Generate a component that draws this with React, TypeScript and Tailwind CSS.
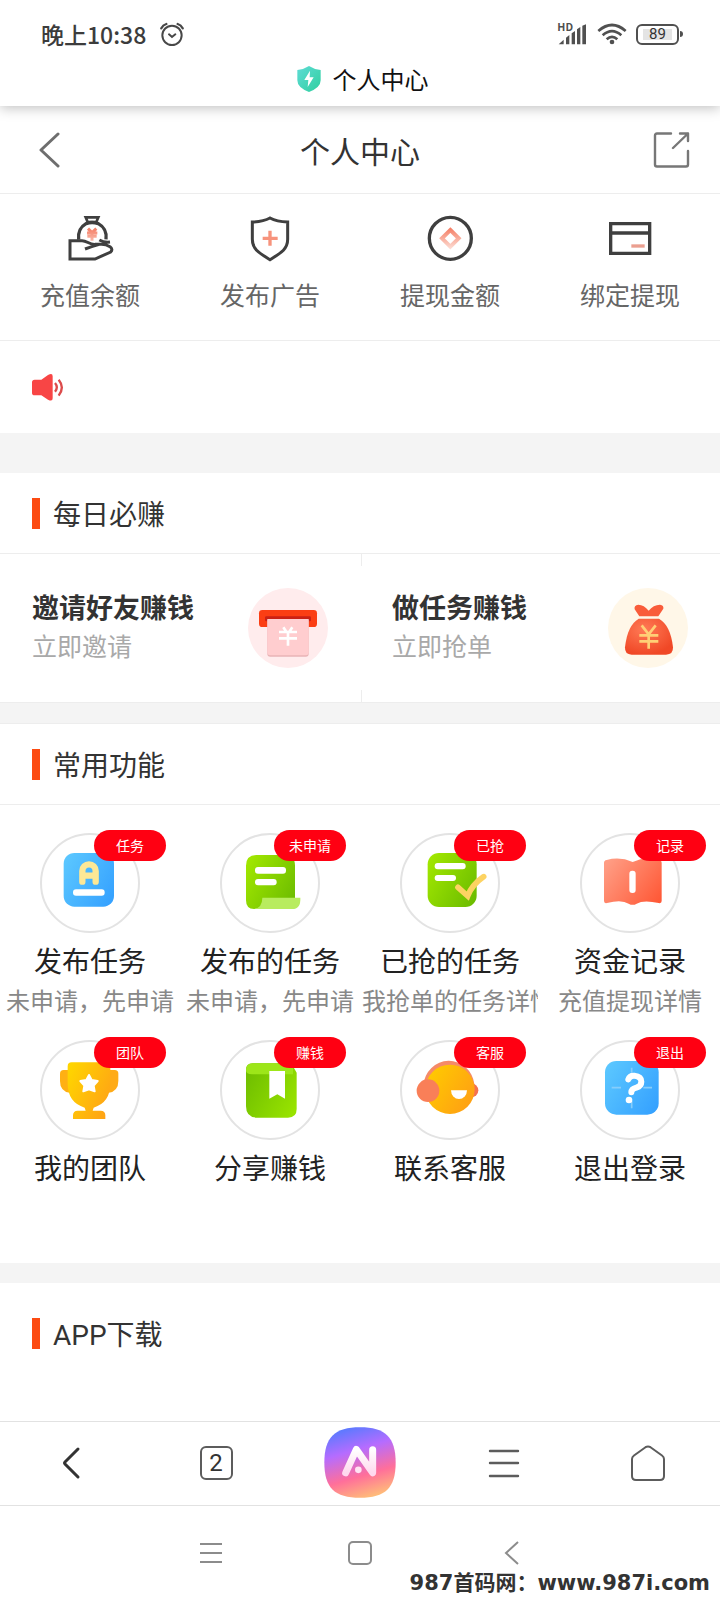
import type { ReactNode } from "react";

function ShieldBolt() {
  return (
    <svg width="26" height="28" viewBox="0 0 78 84" aria-hidden="true">
      <defs>
        <linearGradient id="sb" x1="0" y1="0" x2="1" y2="1">
          <stop offset="0" stopColor="#5fdcd6" />
          <stop offset="1" stopColor="#2fcf9e" />
        </linearGradient>
      </defs>
      <path d="M39 3 Q54 13 74 15 V46 Q74 68 39 81 Q4 68 4 46 V15 Q24 13 39 3Z" fill="url(#sb)" />
      <path d="M42 17 L25 45 H37 L35 66 L53 37 H41Z" fill="#fff" />
    </svg>
  );
}

function AlarmIcon() {
  return (
    <svg width="24" height="24" viewBox="0 0 72 72" fill="none" stroke="#484848" strokeWidth="6" strokeLinecap="round" aria-hidden="true">
      <circle cx="36" cy="40" r="29" />
      <path d="M27 37 L36 45 L46 37" />
      <path d="M4 19 Q9 9 19 6 M53 6 Q63 9 68 19" strokeWidth="7" />
    </svg>
  );
}

function SignalIcon() {
  return (
    <svg width="30" height="24" viewBox="0 0 90 72" fill="#505050" className="overflow-visible" aria-hidden="true">
      <text x="-2" y="27" fontSize="32" fontWeight="700" fontFamily="Noto Sans CJK SC, sans-serif">
        HD
      </text>
      <path d="M2 67 L17 53 V67Z M24 67 V47 L34 39 V67Z M41 67 V34 L51 27 V67Z M57 67 V22 L67 15 V67Z M73 67 V11 L84 7 V67Z" />
    </svg>
  );
}

function WifiIcon() {
  return (
    <svg width="30" height="22" viewBox="0 0 90 66" fill="none" stroke="#505050" strokeWidth="8" aria-hidden="true">
      <path d="M4 24 Q45 -12 86 24" />
      <path d="M17 37 Q45 12 73 37" />
      <path d="M29 49 Q45 34 61 49" />
      <circle cx="45" cy="57" r="7" fill="#505050" stroke="none" />
    </svg>
  );
}

function Battery() {
  return (
    <div className="flex items-center gap-px">
      <div className="flex h-[21px] w-[43px] items-center justify-center rounded-[6px] border-2 border-[#505050]">
        <span className="bg-[#e4e4e4] px-[6px] font-['Roboto'] text-[15px] leading-[11px] text-[#333]">89</span>
      </div>
      <div className="h-[6px] w-[3px] rounded-r-sm bg-[#505050]" />
    </div>
  );
}

const coral = (
  <defs>
    <linearGradient id="coral" gradientUnits="userSpaceOnUse" x1="0" y1="40" x2="0" y2="106">
      <stop offset="0" stopColor="#f47a60" />
      <stop offset="1" stopColor="#fde0d8" />
    </linearGradient>
  </defs>
);

function QuickSvg({ children }: { children: ReactNode }) {
  return (
    <svg width="48" height="48" viewBox="0 0 144 144" fill="none" stroke="#3f3f3f" strokeWidth="10" aria-hidden="true">
      {coral}
      {children}
    </svg>
  );
}

const quick = [
  {
    label: "充值余额",
    icon: (
      <QuickSvg>
        <path d="M59 10 H97 L91 24 H65Z" strokeWidth="8" />
        <path d="M38 77 Q34 44 60 29 Q78 22 97 29 Q124 44 120 76" />
        <path d="M66 44 L78 56 L91 44 M63 57 H94 M64 67 H92 M78 56 V80" stroke="url(#coral)" strokeWidth="9" />
        <path d="M12 80 H48 C64 80 70 93 88 91 L100 91 M12 76 V135 H87 L134 114 Q142 106 132 98 Q118 89 100 91 Q78 97 57 105 M100 78 Q114 86 132 84" strokeWidth="9" />
      </QuickSvg>
    ),
  },
  {
    label: "发布广告",
    icon: (
      <QuickSvg>
        <path d="M72 12 Q92 23 125 24 V76 C125 106 104 117 72 137 C40 117 19 106 19 76 V24 Q52 23 72 12Z" strokeWidth="9" />
        <path d="M50 73 H95 M72 50 V95" stroke="#f7937c" />
      </QuickSvg>
    ),
  },
  {
    label: "提现金额",
    icon: (
      <QuickSvg>
        <circle cx="73" cy="73" r="63" />
        <path d="M73 48 L98 73 L73 98 L48 73Z" stroke="url(#coral)" strokeWidth="12" />
      </QuickSvg>
    ),
  },
  {
    label: "绑定提现",
    icon: (
      <QuickSvg>
        <path d="M14 29 H131 V118 H14Z M14 57 H131" />
        <path d="M76 96 H116" stroke="#eb9f90" />
      </QuickSvg>
    ),
  },
];

function FeatureSvg({ id, from, to, children }: { id: string; from: string; to: string; children: ReactNode }) {
  return (
    <svg className="size-full" viewBox="6 6 288 288" aria-hidden="true">
      <defs>
        <linearGradient id={id} x1="0" y1="0.2" x2="1" y2="0.8">
          <stop offset="0" stopColor={from} />
          <stop offset="1" stopColor={to} />
        </linearGradient>
      </defs>
      {children}
    </svg>
  );
}

const features = [
  {
    label: "发布任务",
    badge: "任务",
    note: "未申请，先申请",
    icon: (
      <FeatureSvg id="f1" from="#5ac6ff" to="#36a2ff">
        <rect x="71" y="60" width="151" height="161" rx="32" fill="url(#f1)" />
        <path d="M127 146 V114 a20 20 0 0 1 40 0 V146 M127 128 H167" fill="none" stroke="#fde896" strokeWidth="19" strokeLinecap="round" />
        <rect x="99" y="169" width="95" height="19" rx="9" fill="#fff" />
      </FeatureSvg>
    ),
  },
  {
    label: "发布的任务",
    badge: "未申请",
    note: "未申请，先申请",
    icon: (
      <FeatureSvg id="f2" from="#a0e600" to="#6dbd00">
        <path d="M78 98 Q78 66 110 66 H193 Q225 66 225 98 V205 H135 Q128 228 102 228 Q78 228 78 202Z" fill="url(#f2)" />
        <path d="M127 194 H241 Q243 228 216 228 H102 Q127 224 127 194Z" fill="#b8ec5f" />
        <rect x="105" y="102" width="93" height="20" rx="9" fill="#fff" />
        <rect x="105" y="138" width="65" height="19" rx="9" fill="#fff" />
      </FeatureSvg>
    ),
  },
  {
    label: "已抢的任务",
    badge: "已抢",
    note: "我抢单的任务详情",
    icon: (
      <FeatureSvg id="f3" from="#a0e600" to="#6dbd00">
        <rect x="83" y="60" width="147" height="162" rx="34" fill="url(#f3)" />
        <rect x="104" y="90" width="93" height="19" rx="9" fill="#fff" />
        <rect x="104" y="126" width="64" height="18" rx="9" fill="#fff" />
        <path d="M174 163 L203 189 Q216 155 251 131" fill="none" stroke="#fdd362" strokeWidth="17" strokeLinecap="round" />
      </FeatureSvg>
    ),
  },
  {
    label: "资金记录",
    badge: "记录",
    note: "充值提现详情",
    icon: (
      <FeatureSvg id="f4" from="#ff9c83" to="#ff5a38">
        <path d="M72 90 Q72 82 80 81 Q120 70 158 87 Q196 70 237 81 Q245 82 245 90 V204 Q245 212 236 210 Q190 200 170 212 Q158 219 146 212 Q125 198 81 210 Q72 212 72 204Z" fill="url(#f4)" />
        <rect x="148" y="113" width="19" height="67" rx="9" fill="#fff" />
      </FeatureSvg>
    ),
  },
  {
    label: "我的团队",
    badge: "团队",
    icon: (
      <FeatureSvg id="f5" from="#ffd400" to="#ffa216">
        <path d="M89 90 H71 Q60 90 60 101 V122 Q60 154 89 158Z" fill="#ffb013" />
        <path d="M206 90 H224 Q235 90 235 101 V122 Q235 154 206 158Z" fill="#ffab17" />
        <path d="M83 79 Q83 67 95 67 H199 Q211 67 211 79 V130 Q211 188 161 203 L158 212 H182 Q196 212 196 226 V237 H99 V226 Q99 212 113 212 H137 L134 203 Q83 188 83 130Z" fill="url(#f5)" />
        <path d="M147 105 L155 120 L173 123 L161 137 L164 154 L147 148 L130 154 L133 137 L121 123 L139 120Z" fill="#fff" stroke="#fff" strokeWidth="6" strokeLinejoin="round" />
      </FeatureSvg>
    ),
  },
  {
    label: "分享赚钱",
    badge: "赚钱",
    icon: (
      <FeatureSvg id="f6" from="#6fbe00" to="#98e300">
        <path d="M78 90 Q78 70 98 70 H206 Q222 70 222 84 L230 98 V207 Q230 233 204 233 H112 Q78 233 78 199Z" fill="url(#f6)" />
        <path d="M78 90 Q78 70 98 70 H206 Q219 70 219 84 V103 H96 Q78 103 78 90Z" fill="#9de619" />
        <path d="M148 93 H195 V176 L172 163 L148 176Z" fill="#fff" />
      </FeatureSvg>
    ),
  },
  {
    label: "联系客服",
    badge: "客服",
    icon: (
      <FeatureSvg id="f7" from="#ffcb00" to="#ff9e14">
        <path d="M70 135 A77 80 0 0 1 223 132 L205 150 H90Z" fill="#f58a68" />
        <circle cx="214" cy="151" r="21" fill="#f5704f" />
        <circle cx="150" cy="148" r="74" fill="url(#f7)" />
        <circle cx="84" cy="152" r="34" fill="#f97f58" />
        <path d="M153 151 H201 A24 26 0 0 1 153 151Z" fill="#fff" />
      </FeatureSvg>
    ),
  },
  {
    label: "退出登录",
    badge: "退出",
    icon: (
      <FeatureSvg id="f8" from="#5ac6ff" to="#36a2ff">
        <rect x="75" y="63" width="161" height="161" rx="34" fill="url(#f8)" />
        <path d="M95 143 H123 M190 143 H216 M155 83 V98 M155 184 V205" stroke="#86cdfb" strokeWidth="5" />
        <path d="M145 118 Q149 106 163 107 Q184 109 184 125 Q184 138 169 143 Q154 147 154 157" fill="none" stroke="#fff" strokeWidth="18" strokeLinecap="round" />
        <circle cx="147" cy="180" r="10" fill="#fff" />
      </FeatureSvg>
    ),
  },
];

function InviteIcon() {
  return (
    <svg width="80" height="80" viewBox="0 0 240 240" aria-hidden="true">
      <circle cx="120" cy="120" r="120" fill="#ffeced" />
      <rect x="33" y="66" width="174" height="51" rx="10" fill="#fb3e14" />
      <rect x="51" y="85" width="138" height="15" rx="4" fill="#cb2115" />
      <path d="M58 95 H182 V197 Q182 206 173 206 H67 Q58 206 58 197Z" fill="#e9b3b6" />
      <path d="M58 93 H182 V193 Q182 202 173 202 H67 Q58 202 58 193Z" fill="#ffcdcf" />
      <path d="M106 118 L115 131 M133 118 L124 131 M93 132 H147 M93 151 H147 M120 132 V173" stroke="#fff" strokeWidth="8" fill="none" />
    </svg>
  );
}

function MoneyBagIcon() {
  return (
    <svg width="80" height="80" viewBox="0 0 240 240" aria-hidden="true">
      <defs>
        <radialGradient id="bag" cx="0.4" cy="0.3" r="0.7">
          <stop offset="0" stopColor="#ff7a56" />
          <stop offset="1" stopColor="#f04826" />
        </radialGradient>
      </defs>
      <circle cx="120" cy="120" r="120" fill="#fff7e8" />
      <path d="M91 50 Q108 50 122 68 Q136 50 156 50 Q168 51 166 62 L151 85 H94 L80 64 Q77 52 91 50Z" fill="#f95c3a" />
      <path d="M92 92 H153 Q188 112 195 178 Q196 200 174 200 H71 Q50 200 51 178 Q58 112 92 92Z" fill="url(#bag)" />
      <path d="M101 112 L122 139 L143 112 M94 142 H151 M94 160 H151 M122 139 V182" stroke="#ffcf76" strokeWidth="8" fill="none" />
    </svg>
  );
}

function SectionTitle({ children }: { children: ReactNode }) {
  return (
    <div className="flex items-center gap-[13px] px-8">
      <span className="h-[31px] w-2 bg-[#fc4b12]" />
      <h2 className="text-[28px] leading-8 text-[#333]">{children}</h2>
    </div>
  );
}

function EarnCard({ title, sub, icon }: { title: string; sub: string; icon: ReactNode }) {
  return (
    <a href="#earn" className="flex flex-1 items-center justify-between px-8 py-[34px]">
      <span className="flex flex-col pb-1 leading-[38px]">
        <span className="text-[27px] font-bold text-[#333]">{title}</span>
        <span className="text-[25px] text-[#a9a9a9]">{sub}</span>
      </span>
      {icon}
    </a>
  );
}

export default function App() {
  return (
    <div className="relative bg-white font-['Noto_Sans_CJK_SC',sans-serif]">
      <header className="relative z-10 bg-white pb-[11px] shadow-[0_2px_12px_rgba(0,0,0,0.25)]">
        <div className="flex items-center justify-between pt-5 pr-[37px] pl-[41px]">
          <div className="flex items-center gap-[14px]">
            <span className="text-[23px] leading-7 font-medium text-[#3c3c3c]">晚上10:38</span>
            <AlarmIcon />
          </div>
          <div className="flex items-center gap-[9px]">
            <SignalIcon />
            <WifiIcon />
            <Battery />
          </div>
        </div>
        <div className="mt-[15px] flex items-center justify-center gap-[11px] pl-1">
          <ShieldBolt />
          <span className="text-[24px] leading-8 text-[#111]">个人中心</span>
        </div>
      </header>

      <div className="flex items-center justify-between border-b border-[#ededed] px-[30px] pt-[26px] pb-[25px]">
        <button aria-label="返回" className="w-[37px] pl-2">
          <svg width="22" height="36" viewBox="0 0 22 36" className="block" fill="none" stroke="#6e6e6e" strokeWidth="3" strokeLinecap="round" strokeLinejoin="round">
            <path d="M20 2 L3 18 L20 34" />
          </svg>
        </button>
        <h1 className="text-[30px] leading-8 text-[#333]">个人中心</h1>
        <button aria-label="分享" className="w-[37px]">
          <svg width="37" height="36" viewBox="0 0 37 36" className="block" fill="none" stroke="#777" strokeWidth="2.4" strokeLinecap="round" strokeLinejoin="round">
            <path d="M18 1.500 H4 Q2 1.500 2 3.500 V32.500 Q2 34.500 4 34.500 H33 Q35 34.500 35 32.500 V19 M27 1.500 H35 V9 M35 1.500 L20 16" />
          </svg>
        </button>
      </div>

      <nav className="grid grid-cols-4 border-b border-[#ededed] pt-5 pb-[30px]">
        {quick.map((q) => (
          <a key={q.label} href="#quick" className="flex flex-col items-center gap-4">
            {q.icon}
            <span className="text-[25px] leading-8 text-[#666]">{q.label}</span>
          </a>
        ))}
      </nav>

      <div className="px-8 py-[30px]">
        <svg width="32" height="32" viewBox="0 0 96 96" className="block" aria-hidden="true">
          <path d="M8 26 H28 L48 12 Q62 4 62 16 V82 Q62 93 48 86 L28 73 H8 Q0 73 0 66 V34 Q0 26 8 26Z" fill="#f84545" />
          <path d="M69 36 Q80 49 69 62 M80 26 Q99 49 80 74" fill="none" stroke="#dc4b4b" strokeWidth="7" />
        </svg>
      </div>
      <div className="h-10 bg-[#f4f4f4]" />

      <section>
        <div className="border-b border-[#ededed] py-6">
          <SectionTitle>每日必赚</SectionTitle>
        </div>
        <div className="relative flex border-b border-[#ededed]">
          <EarnCard title="邀请好友赚钱" sub="立即邀请" icon={<InviteIcon />} />
          <div className="absolute inset-y-0 left-1/2 flex flex-col justify-between pl-px">
            <span className="h-3 w-px bg-[#ededed]" />
            <span className="h-3 w-px bg-[#ededed]" />
          </div>
          <EarnCard title="做任务赚钱" sub="立即抢单" icon={<MoneyBagIcon />} />
        </div>
      </section>
      <div className="h-5 bg-[#f4f4f4]" />

      <section className="border-t border-[#ededed]">
        <div className="border-b border-[#ededed] py-6">
          <SectionTitle>常用功能</SectionTitle>
        </div>
        <div className="grid grid-cols-4 gap-y-5 pt-7 pb-[76px]">
          {features.map((f) => (
            <a key={f.label} href="#feature" className="flex flex-col items-center px-[2px]">
              <span className="relative mb-[7px] size-[100px] rounded-full border-2 border-[#e3e3e3]">
                {f.icon}
                <span className="absolute -top-[5px] left-[52px] flex h-[31px] w-[72px] items-center justify-center rounded-full bg-[#ff0012] text-[14px] text-white">
                  {f.badge}
                </span>
              </span>
              <span className="text-[28px] leading-10 whitespace-nowrap text-[#222]">{f.label}</span>
              {f.note && (
                <span className="max-w-full overflow-hidden text-[24px] leading-10 whitespace-nowrap text-[#888]">{f.note}</span>
              )}
            </a>
          ))}
        </div>
      </section>
      <div className="h-5 bg-[#f4f4f4]" />

      <section className="pt-[34px] pb-[71px]">
        <SectionTitle>
          <span className="font-['Roboto'] leading-none">APP</span>下载
        </SectionTitle>
      </section>

      <nav className="grid grid-cols-5 place-items-center border-y border-[#e2e2e2] pt-1 pb-[6px]">
        <button aria-label="后退">
          <svg width="20" height="34" viewBox="0 0 20 34" fill="none" stroke="#333" strokeWidth="3" strokeLinecap="round">
            <path d="M16 3 L3 16 Q2 17 3 18 L16 31" />
          </svg>
        </button>
        <button className="flex h-[34px] w-[33px] items-center justify-center rounded-[6px] border-2 border-[#5c5c5c] font-['Roboto'] text-[24px] text-[#333]">
          2
        </button>
        <button aria-label="AI">
          <svg width="72" height="73" viewBox="0 0 216 216" className="block">
            <defs>
              <linearGradient id="ai" x1="0.35" y1="0" x2="0.65" y2="1">
                <stop offset="0.02" stopColor="#6079ff" />
                <stop offset="0.32" stopColor="#b56cff" />
                <stop offset="0.68" stopColor="#ff6f9a" />
                <stop offset="1" stopColor="#ffbf78" />
              </linearGradient>
              <linearGradient id="stroke" x1="0" y1="0" x2="0" y2="1">
                <stop offset="0" stopColor="#fff" />
                <stop offset="1" stopColor="#ffd9ee" />
              </linearGradient>
            </defs>
            <path d="M108 2 C184 2 215 32 215 108 C215 184 184 214 108 214 C32 214 1 184 1 108 C1 32 32 2 108 2Z" fill="url(#ai)" />
            <path d="M65 139 L97 69 L146 139 V70" fill="none" stroke="url(#stroke)" strokeWidth="21" strokeLinecap="round" strokeLinejoin="round" />
            <circle cx="103" cy="130" r="10" fill="#ffe3f3" />
          </svg>
        </button>
        <button aria-label="菜单">
          <svg width="32" height="30" viewBox="0 0 32 30" stroke="#5c5c5c" strokeWidth="2.400" strokeLinecap="round">
            <path d="M2 3 H30 M2 15 H30 M2 28 H30" />
          </svg>
        </button>
        <button aria-label="主页">
          <svg width="34" height="36" viewBox="0 0 34 36" fill="none" stroke="#5c5c5c" strokeWidth="2" strokeLinejoin="round">
            <path d="M14.500 2.200 Q17 0.600 19.500 2.200 L31 10.500 Q33 12 33 14 V31 Q33 35 29 35 H5 Q1 35 1 31 V14 Q1 12 3 10.500Z" />
          </svg>
        </button>
      </nav>

      <div className="flex items-center justify-center gap-[126px] pt-[35px] pb-9">
        <button aria-label="最近任务">
          <svg width="24" height="24" viewBox="0 0 24 24" className="block" stroke="#8c8c8c" strokeWidth="2">
            <path d="M2 3 H24 M2 12 H24 M2 21 H24" />
          </svg>
        </button>
        <button aria-label="桌面" className="size-6 rounded-[5px] border-2 border-[#8c8c8c]" />
        <button aria-label="系统返回">
          <svg width="24" height="24" viewBox="0 0 24 24" className="block" fill="none" stroke="#8c8c8c" strokeWidth="2">
            <path d="M20 1 L8 12 L20 23" />
          </svg>
        </button>
      </div>

      <p className="absolute right-[10px] bottom-1 font-['DejaVu_Sans','Noto_Sans_CJK_SC',sans-serif] text-[21px] leading-7 font-bold text-[#333]">
        987首码网：www.987i.com
      </p>
    </div>
  );
}
